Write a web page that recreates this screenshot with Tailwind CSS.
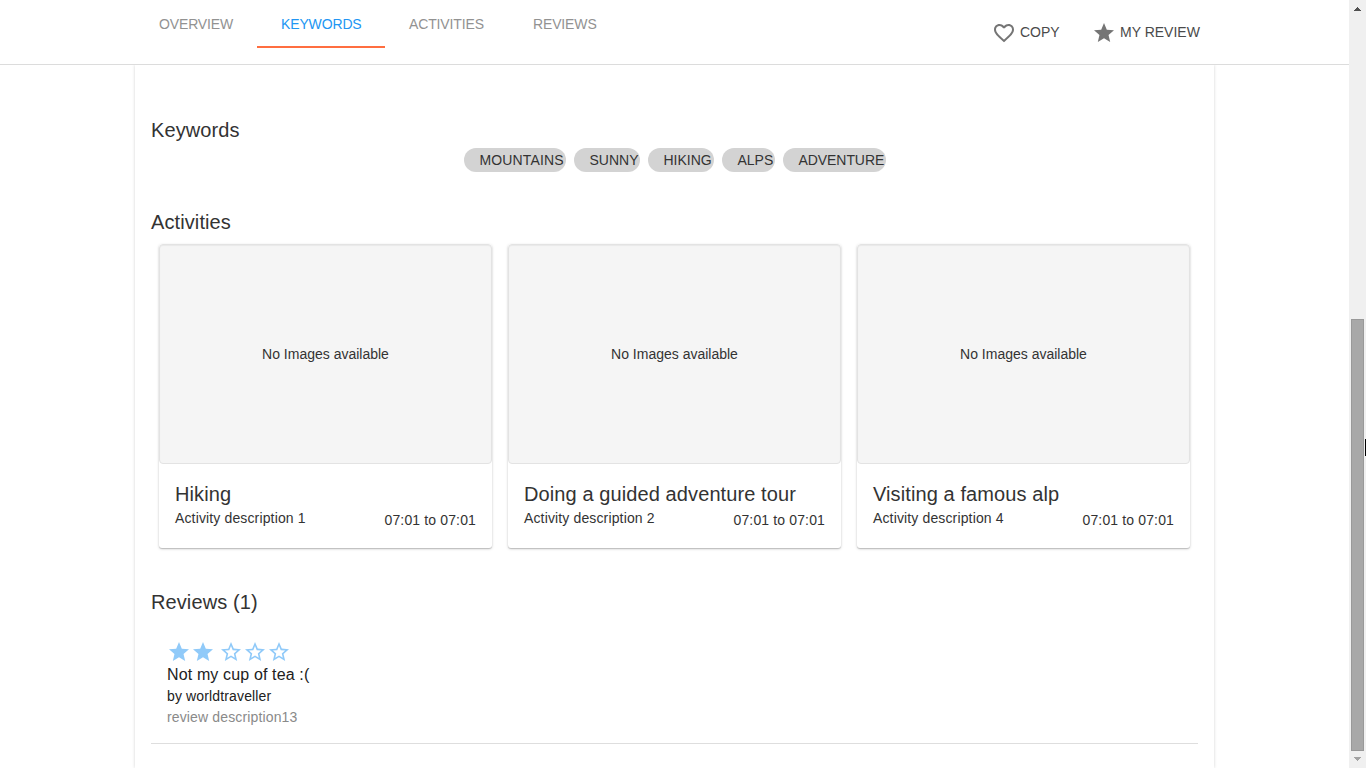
<!DOCTYPE html>
<html lang="en">
<head>
<meta charset="utf-8">
<title>Trip</title>
<script src="https://cdn.jsdelivr.net/npm/@tailwindcss/browser@4"></script>
</head>
<body class="flex h-[768px] w-[1366px] overflow-hidden bg-white font-['Liberation_Sans',Arial,sans-serif] text-sm leading-5 tracking-[0.01em] text-[#333]">
<svg class="hidden">
  <symbol id="star" viewBox="0 0 24 24"><path d="M12 17.27L18.18 21l-1.64-7.03L22 9.24l-7.19-.61L12 2 9.19 8.63 2 9.24l5.46 4.73L5.82 21z"/></symbol>
  <symbol id="star-outline" viewBox="0 0 24 24"><path d="M22 9.24l-7.19-.62L12 2 9.19 8.63 2 9.24l5.46 4.73L5.82 21 12 17.27 18.18 21l-1.63-7.03L22 9.24zM12 15.4l-3.76 2.27 1-4.28-3.32-2.88 4.38-.38L12 6.1l1.71 4.04 4.38.38-3.32 2.88 1 4.28L12 15.4z"/></symbol>
  <symbol id="heart" viewBox="0 0 24 24"><path d="M16.5 3c-1.74 0-3.41.81-4.5 2.09C10.91 3.81 9.24 3 7.5 3 4.42 3 2 5.42 2 8.5c0 3.78 3.4 6.86 8.55 11.54L12 21.35l1.45-1.32C18.6 15.36 22 12.28 22 8.5 22 5.42 19.58 3 16.5 3zm-4.4 15.55l-.1.1-.1-.1C7.14 14.24 4 11.39 4 8.5 4 6.5 5.5 5 7.5 5c1.54 0 3.04.99 3.57 2.36h1.87C13.46 5.99 14.96 5 16.5 5c2 0 3.5 1.5 3.5 3.5 0 2.89-3.14 5.74-7.9 10.05z"/></symbol>
</svg>
<div class="flex w-[1349px] flex-col">
  <header class="flex h-[65px] shrink-0 items-start justify-between border-b border-[#dcdcdc] bg-white pl-[135px] pr-[148px]">
    <nav class="flex tracking-[-0.01em] text-[#929292]">
      <a class="h-12 w-[122px] pl-6 pt-3.5">OVERVIEW</a>
      <a class="h-12 w-[128px] border-b-2 border-[#ff6e40] pl-6 pt-3.5 text-[#2196f3]">KEYWORDS</a>
      <a class="h-12 w-[124px] pl-6 pt-3.5">ACTIVITIES</a>
      <a class="h-12 w-[112px] pl-6 pt-3.5">REVIEWS</a>
    </nav>
    <div class="flex pt-[21px] tracking-normal text-[#4a4a4a]">
      <div class="flex w-[100px] items-center gap-1"><svg class="size-6 fill-[#757575]"><use href="#heart"/></svg><span class="-mt-0.5">COPY</span></div>
      <div class="flex w-[109px] items-center gap-1 whitespace-nowrap"><svg class="size-6 fill-[#757575]"><use href="#star"/></svg><span class="-mt-0.5">MY REVIEW</span></div>
    </div>
  </header>
  <main class="mx-[135px] flex flex-1 flex-col bg-white px-4 shadow-[0_0_3px_rgba(0,0,0,0.18)] [clip-path:inset(0_-8px)]">
    <h2 class="mt-[53px] text-xl leading-6 tracking-[0.005em]">Keywords</h2>
    <div class="mt-[6px] flex justify-center gap-2 leading-6 tracking-normal">
      <span class="h-6 w-[102px] rounded-full bg-[#d3d3d3] pl-4 tracking-[0.01em]">MOUNTAINS</span>
      <span class="h-6 w-[66px] rounded-full bg-[#d3d3d3] pl-4">SUNNY</span>
      <span class="h-6 w-[66px] rounded-full bg-[#d3d3d3] pl-4">HIKING</span>
      <span class="h-6 w-[53px] rounded-full bg-[#d3d3d3] pl-4">ALPS</span>
      <span class="h-6 w-[103px] rounded-full bg-[#d3d3d3] pl-4 tracking-[-0.005em]">ADVENTURE</span>
    </div>
    <h2 class="mt-[38px] text-xl leading-6 tracking-[0.005em]">Activities</h2>
    <div class="mt-[10px] flex gap-4 pl-2">
      <article class="h-[304px] w-[333px] rounded-[3px] bg-white shadow-[0_1px_3px_rgba(0,0,0,0.18),0_1px_1px_rgba(0,0,0,0.16)]">
        <div class="flex h-[220px] items-center justify-center rounded border border-[#e3e3e3] bg-[#f5f5f5] tracking-normal shadow-[inset_0_1px_1px_rgba(0,0,0,0.05)]">No Images available</div>
        <div class="flex justify-between px-4 pt-[18px]"><div><h3 class="whitespace-nowrap text-xl leading-6 tracking-[0.005em]">Hiking</h3><p class="mt-0.5">Activity description 1</p></div><span class="mt-7">07:01 to 07:01</span></div>
      </article>
      <article class="h-[304px] w-[333px] rounded-[3px] bg-white shadow-[0_1px_3px_rgba(0,0,0,0.18),0_1px_1px_rgba(0,0,0,0.16)]">
        <div class="flex h-[220px] items-center justify-center rounded border border-[#e3e3e3] bg-[#f5f5f5] tracking-normal shadow-[inset_0_1px_1px_rgba(0,0,0,0.05)]">No Images available</div>
        <div class="flex justify-between px-4 pt-[18px]"><div class="w-0 whitespace-nowrap"><h3 class="text-xl leading-6 tracking-[0.005em]">Doing a guided adventure tour</h3><p class="mt-0.5">Activity description 2</p></div><span class="mt-7">07:01 to 07:01</span></div>
      </article>
      <article class="h-[304px] w-[333px] rounded-[3px] bg-white shadow-[0_1px_3px_rgba(0,0,0,0.18),0_1px_1px_rgba(0,0,0,0.16)]">
        <div class="flex h-[220px] items-center justify-center rounded border border-[#e3e3e3] bg-[#f5f5f5] tracking-normal shadow-[inset_0_1px_1px_rgba(0,0,0,0.05)]">No Images available</div>
        <div class="flex justify-between px-4 pt-[18px]"><div><h3 class="whitespace-nowrap text-xl leading-6 tracking-[0.005em]">Visiting a famous alp</h3><p class="mt-0.5">Activity description 4</p></div><span class="mt-7">07:01 to 07:01</span></div>
      </article>
    </div>
    <h2 class="mt-[42px] text-xl leading-6 tracking-[0.005em]">Reviews (1)</h2>
    <section class="mt-[26px] h-[104px] border-b border-[#dedede] pl-4 text-[#212121]">
      <div class="flex fill-[#90caf9]">
        <svg class="size-6"><use href="#star"/></svg><svg class="size-6"><use href="#star"/></svg>
        <svg class="ml-1 size-6"><use href="#star-outline"/></svg><svg class="size-6"><use href="#star-outline"/></svg><svg class="size-6"><use href="#star-outline"/></svg>
      </div>
      <h3 class="text-base leading-[22px]">Not my cup of tea :(</h3>
      <p class="leading-5">by worldtraveller</p>
      <p class="mt-px leading-5 text-[#8a8a8a]">review description13</p>
    </section>
  </main>
</div>
<aside class="relative flex w-[17px] flex-col items-center justify-between bg-[#f0f0f0] py-[7px]">
  <svg class="h-1 w-[7px] fill-[#505050]" viewBox="0 0 7 4" shape-rendering="crispEdges"><path d="M3 0h1v1h1v1h1v1h1v1H0V3h1V2h1V1h1z"/></svg>
  <div class="absolute left-[2px] top-[319px] h-[432px] w-[13px] border border-[#999] bg-[#a8a8a8]"></div>
  <div class="absolute right-0 top-[439px] h-[17px] w-px bg-black"></div>
  <svg class="h-1 w-[7px] fill-[#a3a3a3]" viewBox="0 0 7 4" shape-rendering="crispEdges"><path d="M0 0h7v1H6v1H5v1H4v1H3V3H2V2H1V1H0z"/></svg>
</aside>
</body>
</html>
